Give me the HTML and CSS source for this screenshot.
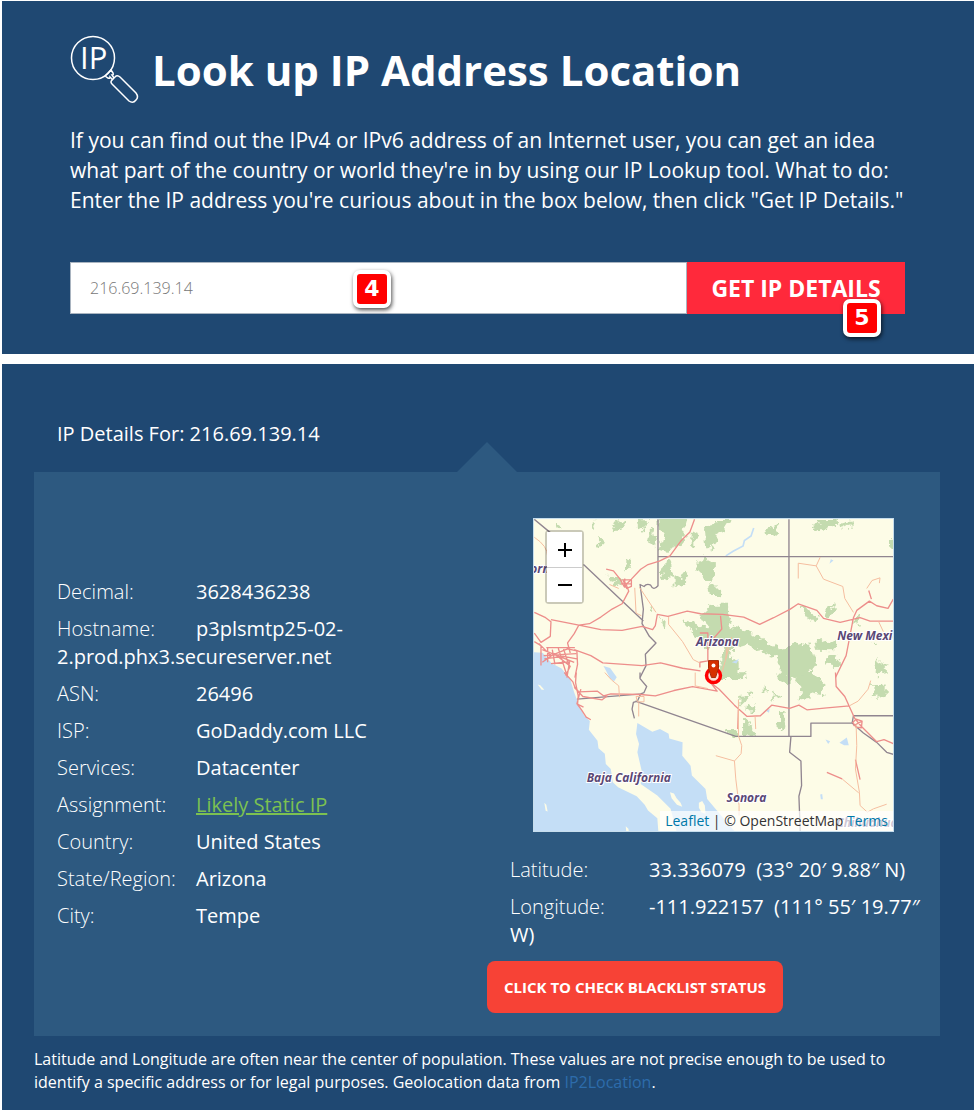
FILE: index.html
```html
<!DOCTYPE html>
<html lang="en">
<head>
<meta charset="utf-8">
<title>Look up IP Address Location</title>
<link rel="stylesheet" href="styles.css">
</head>
<body>
<main class="page">
  <section class="lookup">
    <header class="lookup-head">
      <svg class="lookup-icon" viewBox="0 0 70 70" aria-hidden="true">
        <g fill="none" stroke="#fff" stroke-width="1.5">
          <circle cx="23" cy="23" r="21.5"/>
          <path d="M35 41 L41 35 L43 38 Q44 40 42 40 L44 43 M35 41 L38 43 Q40 44 40 42 L43 45"/>
          <path d="M42 45 L46 41 Q48 40 50 42 L66 58 Q69 62 66 65 Q63 69 59 66 L42 49 Q40 47 42 45Z"/>
        </g>
        <text class="icon-text" x="10" y="34">IP</text>
      </svg>
      <h1>Look up IP Address Location</h1>
    </header>
    <p class="intro">If you can find out the IPv4 or IPv6 address of an Internet user, you can get an idea what part of the country or world they're in by using our IP Lookup tool. What to do: Enter the IP address you're curious about in the box below, then click "Get IP Details."</p>
    <form class="search" onsubmit="return false">
      <div class="field">
        <input type="text" aria-label="IP address" value="216.69.139.14">
        <span class="step step-four">4</span>
      </div>
      <div class="submit">
        <button type="submit">GET IP DETAILS</button>
        <span class="step step-five">5</span>
      </div>
    </form>
  </section>

  <section class="result">
    <h2>IP Details For: 216.69.139.14</h2>
    <div class="panel">
      <div class="details">
        <p><span class="label">Decimal:</span><span>3628436238</span></p>
        <p><span class="label">Hostname:</span><span>p3plsmtp25-02-2.prod.phx3.secureserver.net</span></p>
        <p><span class="label">ASN:</span><span>26496</span></p>
        <p><span class="label">ISP:</span><span>GoDaddy.com LLC</span></p>
        <p><span class="label">Services:</span><span>Datacenter</span></p>
        <p><span class="label">Assignment:</span><a href="#">Likely Static IP</a></p>
        <p><span class="label">Country:</span><span>United States</span></p>
        <p><span class="label">State/Region:</span><span>Arizona</span></p>
        <p><span class="label">City:</span><span>Tempe</span></p>
      </div>
      <div class="place">
        <div class="map">
          <svg class="map-art" viewBox="0 0 360 313" role="img" aria-label="Map of Arizona">
            <filter id="rough" x="-5%" y="-5%" width="110%" height="110%">
              <feTurbulence type="fractalNoise" baseFrequency=".12" numOctaves="3" seed="4"/>
              <feDisplacementMap in="SourceGraphic" scale="13" xChannelSelector="R" yChannelSelector="G"/>
            </filter>
            <rect width="360" height="313" fill="#fdfce7"/>
            <g transform="translate(-3 154) scale(.33333)">
              <path class="sea" d="M0 -62 L35 -60 L62 -28 L92 -12 L118 20 L130 60 L142 92 L160 130 L177 146 L174 172 L200 205 L203 228 L222 244 L225 275 L240 290 L246 330 L262 345 L318 372 L342 398 L352 415 L380 438 L384 490 H0Z"/>
              <path class="sea" d="M320 152 L365 178 L388 170 L414 184 L416 198 L456 210 L455 250 L480 280 L484 310 L525 350 L530 380 L580 440 L620 486 L440 486 L420 410 L380 370 L330 335 L334 300 L320 240 L325 215 L316 185Z"/>
              <path class="sea" d="M218 -20 L238 -14 L258 14 L250 26 L238 18Z"/>
              <path class="land" d="M418 360 l12 4 l8 14 l12 14 l5 12 l-16 -6 l-16 -20z M505 392 l10 -6 l8 14 l2 25 l-12 -4 l-8 -14z M40 392 l6 6 l4 20 l-6 -2z M20 36 l8 2 l12 14 l-8 0z M285 462 l8 8 l2 14 h-8z"/>
            </g>
            <g class="green" filter="url(#rough)">
              <path transform="translate(-3 -3) scale(.33333)" d="M258 15 l18 2 4 12 -22 14 -8 -8z M318 10 h34 l-6 18 -18 12 -8 -14z M354 40 l20 4 4 22 -12 20 -14 -6 4 -20z M384 0 h94 l-10 34 -20 12 22 20 -18 22 -28 8 -8 16 -32 -12 4 -26 18 -4 -18 -24z M484 48 l14 -6 6 14 -12 30 -10 -4z M520 30 l35 -8 V84 l-22 16 -10 -18z M186 18 l12 6 -8 24 -6 -4z M204 68 l10 14 -6 8 -10 -10z M70 20 l28 8 -10 12 -16 -6z M292 118 l8 14 -4 28 -16 10 6 -26z M230 176 l22 6 16 16 -2 14 -18 -8z M400 136 l18 4 4 28 10 16 -18 8 -16 -10 -8 -24z M432 180 l26 -6 10 20 -14 24 -22 -6z M504 138 l18 -10 28 14 V200 l-24 -8 -22 -30z M536 208 l19 -4 v34 l-16 -8z M392 304 l10 14 -2 26 -8 -18z M462 308 l28 6 8 18 30 8 27 -28 v42 l-28 30 -30 -16 -14 -24z M364 262 l10 18 -4 10 -8 -12z"/>
              <path transform="translate(177 -3) scale(.33333)" d="M8 12 h52 l-4 14 -16 6 -4 14 -26 14z M166 42 l40 -16 4 20 -18 16 -24 -4z M296 34 l20 -8 30 4 2 12 -14 2 -28 -4z M318 12 h60 l10 8 -28 10 -12 8 -8 -10 -20 -4z M388 24 l30 -10 h14 l-10 14 -30 8z M0 150 l8 16 6 26 -14 14z M0 218 h26 v26 h-26z M0 264 h50 v36 l16 34 46 12 30 12 32 24 28 16 34 -6 v-2 l54 -8 14 16 14 40 -26 34 -20 0 -8 12 h-62 v-50 l-34 -22 -60 -24 -40 12 -4 30 24 20 -2 40 h-64 l10 -60 12 -36 -20 -10 -24 16 -20 -8 v-44 l20 -14 -14 -16 -18 -8z M272 270 l48 26 2 14 -14 6 -34 -22z M338 290 l42 -22 -14 24 -20 10z M316 380 l44 -8 20 10 -10 22 -50 -2z M354 420 l20 -4 16 20 -18 22 -22 -16z M440 292 l12 14 -4 18 -16 -4z M484 374 l24 12 -6 12z M500 424 l8 16 24 8 -12 12 18 14 -24 4 -14 -18z M540 70 l9 -2 v28 l-9 -8z"/>
              <path transform="translate(177 154) scale(.33333)" d="M202 0 h36 v32 l-30 -12z M248 8 l30 -10 h32 l14 20 24 20 -16 24 -26 -6 -16 20 -12 14 -10 -6 6 -34z M60 2 l40 0 6 12 -34 6z M110 52 l20 8 -18 20z M92 72 l16 14 -14 14z M116 94 l24 -8 -12 28 -14 4z M160 40 l14 8 -14 14z M182 56 l24 16 -12 8z M206 120 l18 6 4 40 -16 12 -6 -28z M486 38 l44 -2 v34 l-40 4z M50 170 l24 0 4 22 h-24z M98 142 l32 28 4 22 -36 0z"/>
            </g>
            <g transform="translate(177 -3) scale(.33333)">
              <path class="water" d="M130 36 L122 60 L102 74 L98 90 L68 106 L46 120"/>
              <path class="sea" d="M362 130 l8 4 -12 10z M64 440 l22 -10 -8 14z M388 682 l22 -16 6 24 -14 0z M346 672 l14 6 -6 8z M166 586 l12 -6 -2 12z M330 838 l6 -2 2 16 -6 0z"/>
            </g>
            <g class="border" transform="translate(-3 -3) scale(.33333)">
              <path d="M10 10 L58 50 M158 146 L338 316 M382 10 V210 Q368 226 360 208 Q348 202 340 212 L328 206 L338 280 L334 324 L356 362 L376 382 L344 416 L346 450 L328 486 M382 122 H1100 M776 10 V665"/>
            </g>
            <g class="border" transform="translate(-3 154) scale(.33333)">
              <path d="M138 80 L334 64 M328 0 V18 L348 42 L340 60 L330 64 L320 86 L308 90 L304 110 L311 138 M314 86 L616 192 H842 V152 H966 L970 130 H1090 M966 152 L1000 182 L1040 210 L1070 240 L1090 246 M782 192 L778 240 L812 266 L814 340 L806 372 L810 480"/>
            </g>
            <g class="road" transform="translate(-3 -3) scale(.33333)">
              <path d="M492 10 L478 48 L450 76 L418 120 L386 136 L352 146 L330 160 L302 190 L280 212 L268 190 L248 165 L226 160 M284 200 L294 226 L274 264 L244 280 L210 304 L176 324 L144 328 L130 354 L110 382 L118 412 M144 328 L210 342 L274 344 L334 332 L366 342 L374 330 L380 296 L412 302 L470 286 L510 294 L576 296 L640 304 L688 326 L730 306 L780 280 L804 264 L860 284 L880 308 L930 320 L990 306 L1020 316 H1090 M10 290 L44 306 L60 318 L58 362 L30 380 L10 352 M60 312 L144 328 M130 402 L180 420 L216 442 L334 450 L390 442 L456 458 L510 466 M1090 250 L1074 278 L1040 270 L1018 256 L980 284 L970 306 L948 420 L916 486 M1016 224 L1024 250 M570 300 L574 340 L546 372"/>
              <path d="M10 378 L30 390 V450 M24 384 L60 420 L110 400 L138 406 L140 446 L132 486 M34 402 L130 440 M38 420 L136 414 M50 398 V440 M64 402 L72 446 M82 398 L108 480 M98 400 L116 456 M34 440 L70 414 L118 452 L104 480 M46 396 H132 M40 430 L98 422 L138 430 M60 444 L116 438 L108 486"/>
              <path d="M276 192 h26 v20 l-14 6z M282 188 v28 M270 204 h32 M508 456 V440 L532 436 V352 H508"/>
            </g>
            <g class="road" transform="translate(-3 154) scale(.33333)">
              <path d="M100 0 L126 28 L132 44 L144 58 L200 56 L218 70 L240 64 L330 66 L374 70 L430 54 L486 42 L560 56 L540 30 L566 50 L612 98 L650 132 L690 130 L724 98 L778 108 L806 98 L830 112 L890 106 L958 100 M136 0 L134 30 L142 70 L140 96 L152 112 L166 134 L180 142 M130 44 L156 72 L214 82 L230 70 M150 50 L138 94 L158 104 M624 106 L622 170 M916 0 L918 42 L944 72 L974 138 L992 160 L1040 208 L1062 202 L1090 214 M978 140 l18 6 -2 20 -16 -2 -10 -14z M970 160 L996 146 M976 262 L990 322 M890 300 L936 320"/>
            </g>
            <g class="road minor" transform="translate(-3 -3) scale(.33333)">
              <path d="M10 64 Q50 90 50 122 M326 214 L376 290 M312 216 L316 292 L332 300 M414 304 V326 L456 378 L488 432 L508 442 M236 206 L264 218 M804 188 V142 L858 150 L870 124 M858 150 L880 190 L938 212 L944 248 L970 290 M1010 218 L1026 194 L1050 186 L1048 202 M1046 318 L1060 348 M590 380 L586 430 L570 486 M604 364 L586 430"/>
            </g>
            <g class="road minor" transform="translate(-3 154) scale(.33333)">
              <path d="M222 0 L242 22 L264 40 L266 74 M316 72 h24 v16 h-20z M324 90 V132 M494 0 V40 L532 48 M624 82 V190 L634 220 L632 244 L612 266 L616 320 L626 400 V430 M612 266 L556 250 M978 156 L980 220 L976 290 L988 360 L990 400 L1012 420 L1030 410 L1070 396 M936 320 L986 362 M958 100 L984 86 L1014 50 L1022 24 M674 130 L676 170"/>
            </g>
            <g class="area-name" text-anchor="middle">
              <text x="6" y="54">orn</text>
              <text x="184" y="127">Arizona</text>
              <text x="304" y="121" text-anchor="start">New Mexico</text>
              <text x="95" y="264">Baja California</text>
              <text x="213" y="284">Sonora</text>
              <text x="334" y="309">Chihuahua</text>
            </g>
            <circle cx="180" cy="157" r="7" fill="#fbe3d8" stroke="#f00" stroke-width="3.5"/>
            <path d="M175 142 h10 v8 l-3 9 h-4 l-3 -9z" fill="#d63000" stroke="#a52a08"/>
            <circle cx="180" cy="147" r="2" fill="#fff"/>
          </svg>
          <div class="zoom">
            <button type="button" aria-label="Zoom in"><svg viewBox="0 0 14 14"><path d="M7 0V14M0 7H14"/></svg></button>
            <button type="button" aria-label="Zoom out"><svg viewBox="0 0 14 14"><path d="M0 7H14"/></svg></button>
          </div>
          <div class="credit"><a href="#">Leaflet</a> | © OpenStreetMap <a href="#">Terms</a></div>
        </div>
        <div class="coords">
          <p><span class="label">Latitude:</span><span>33.336079 &nbsp;(33° 20′ 9.88″ N)</span></p>
          <p><span class="label">Longitude:</span><span>-111.922157 &nbsp;(111° 55′ 19.77″ W)</span></p>
        </div>
        <button class="blacklist" type="button">CLICK TO CHECK BLACKLIST STATUS</button>
      </div>
    </div>
    <p class="note">Latitude and Longitude are often near the center of population. These values are not precise enough to be used to identify a specific address or for legal purposes. Geolocation data from <a href="#">IP2Location</a>.</p>
  </section>
</main>
</body>
</html>
```
FILE: styles.css
```css
* { box-sizing: border-box; }
body { margin: 0; background: #fff; color: #fff; font-family: "Open Sans", sans-serif; }
h1, h2, p { margin: 0; }
button { border: 0; color: #fff; font-family: inherit; cursor: pointer; }
.page { display: flex; flex-direction: column; gap: 10px; padding: 1px 1px 1px 2px; }
.lookup { padding: 34px 69px 40px 68px; background: #1f4872; }
.lookup-head { display: flex; align-items: center; gap: 12px; }
.lookup-icon { width: 70px; height: 70px; flex: none; }
.icon-text { font-size: 31px; fill: #fff; }
h1 { font-size: 42px; line-height: 60px; font-weight: 700; }
.intro { margin: 20px -10px 0 0; font-size: 21px; line-height: 30px; }
.search { display: flex; margin-top: 47px; }
.field { position: relative; flex: 1; }
.field input { display: block; width: 100%; height: 52px; padding: 0 19px; border: 1px solid #a9b4c0; background: #fff; color: #777; font: 300 16px "Open Sans", sans-serif; }
.submit { position: relative; }
.submit button { width: 218px; height: 52px; padding: 0; background: #ff293b; font-size: 23px; font-weight: 700; }
.step { position: absolute; width: 38px; height: 38px; border: 4px solid #fff; border-radius: 7px; background: #f00; box-shadow: 1px 2px 4px rgba(0, 0, 0, .7); font: 700 22px/30px "DejaVu Sans", sans-serif; text-align: center; }
.step-four { left: 283px; top: 8px; }
.step-five { right: 24px; top: 37px; }
.result { padding: 55px 34px 16px 32px; background: #1f4872; }
h2 { padding-left: 23px; font-size: 20px; line-height: 30px; font-weight: 400; }
.panel { position: relative; display: grid; grid-template-columns: minmax(0, 1fr) minmax(0, 1fr); margin-top: 23px; padding: 46px 23px 23px; background: #2d5980; }
.panel::before { content: ""; position: absolute; left: 50%; top: -30px; margin-left: -30px; border: 30px solid transparent; border-top: 0; border-bottom-color: #2d5980; }
.details { padding: 60px 100px 0 0; }
.details, .coords { font-size: 20px; line-height: 28px; font-weight: 400; }
.details p, .coords p { margin-bottom: 9px; }
.label { display: inline-block; width: 139px; font-weight: 300; }
.details a { color: #7cc151; }
.place { display: flex; flex-direction: column; }
.map { position: relative; margin: 0 23px 0 46px; border: 1px solid #c6ddec; overflow: hidden; }
.map-art { display: block; width: 100%; }
.sea { fill: #c4def6; }
.land { fill: #fdfce7; }
.green { fill: #c4dbaf; }
.water { fill: none; stroke: #c4def6; stroke-width: 5; }
.border, .road { fill: none; stroke-linejoin: round; }
.border { stroke: #908590; stroke-width: 4; }
.road { stroke: #ed8e8b; stroke-width: 4; }
.minor { stroke: #f5bea0; stroke-width: 3; }
.area-name { font-size: 12px; font-style: italic; font-weight: 700; fill: #5a4775; stroke: #fff; stroke-width: 2px; paint-order: stroke; }
.zoom { position: absolute; left: 11px; top: 11px; border: 2px solid rgba(0, 0, 0, .2); border-radius: 4px; background-clip: padding-box; }
.zoom button { display: flex; align-items: center; justify-content: center; width: 35px; height: 35px; padding: 0; background: #fff; }
.zoom button + button { border-top: 1px solid #ccc; }
.zoom svg { width: 14px; height: 14px; fill: none; stroke: #000; stroke-width: 2; }
.credit { position: absolute; right: 0; bottom: 0; padding: 0 5px; background: rgba(255, 255, 255, .7); color: #333; font-size: 14px; line-height: 20px; }
.credit a { color: #0078a8; text-decoration: none; }
.coords { margin: 24px -8px 0 23px; }
.blacklist { align-self: flex-start; height: 52px; margin-top: 3px; padding: 0 17px; border-radius: 8px; background: #f74236; font-size: 15px; font-weight: 700; }
.note { margin-top: 12px; font-size: 16px; line-height: 23px; }
.note a { color: #2d6cab; text-decoration: none; }
```
